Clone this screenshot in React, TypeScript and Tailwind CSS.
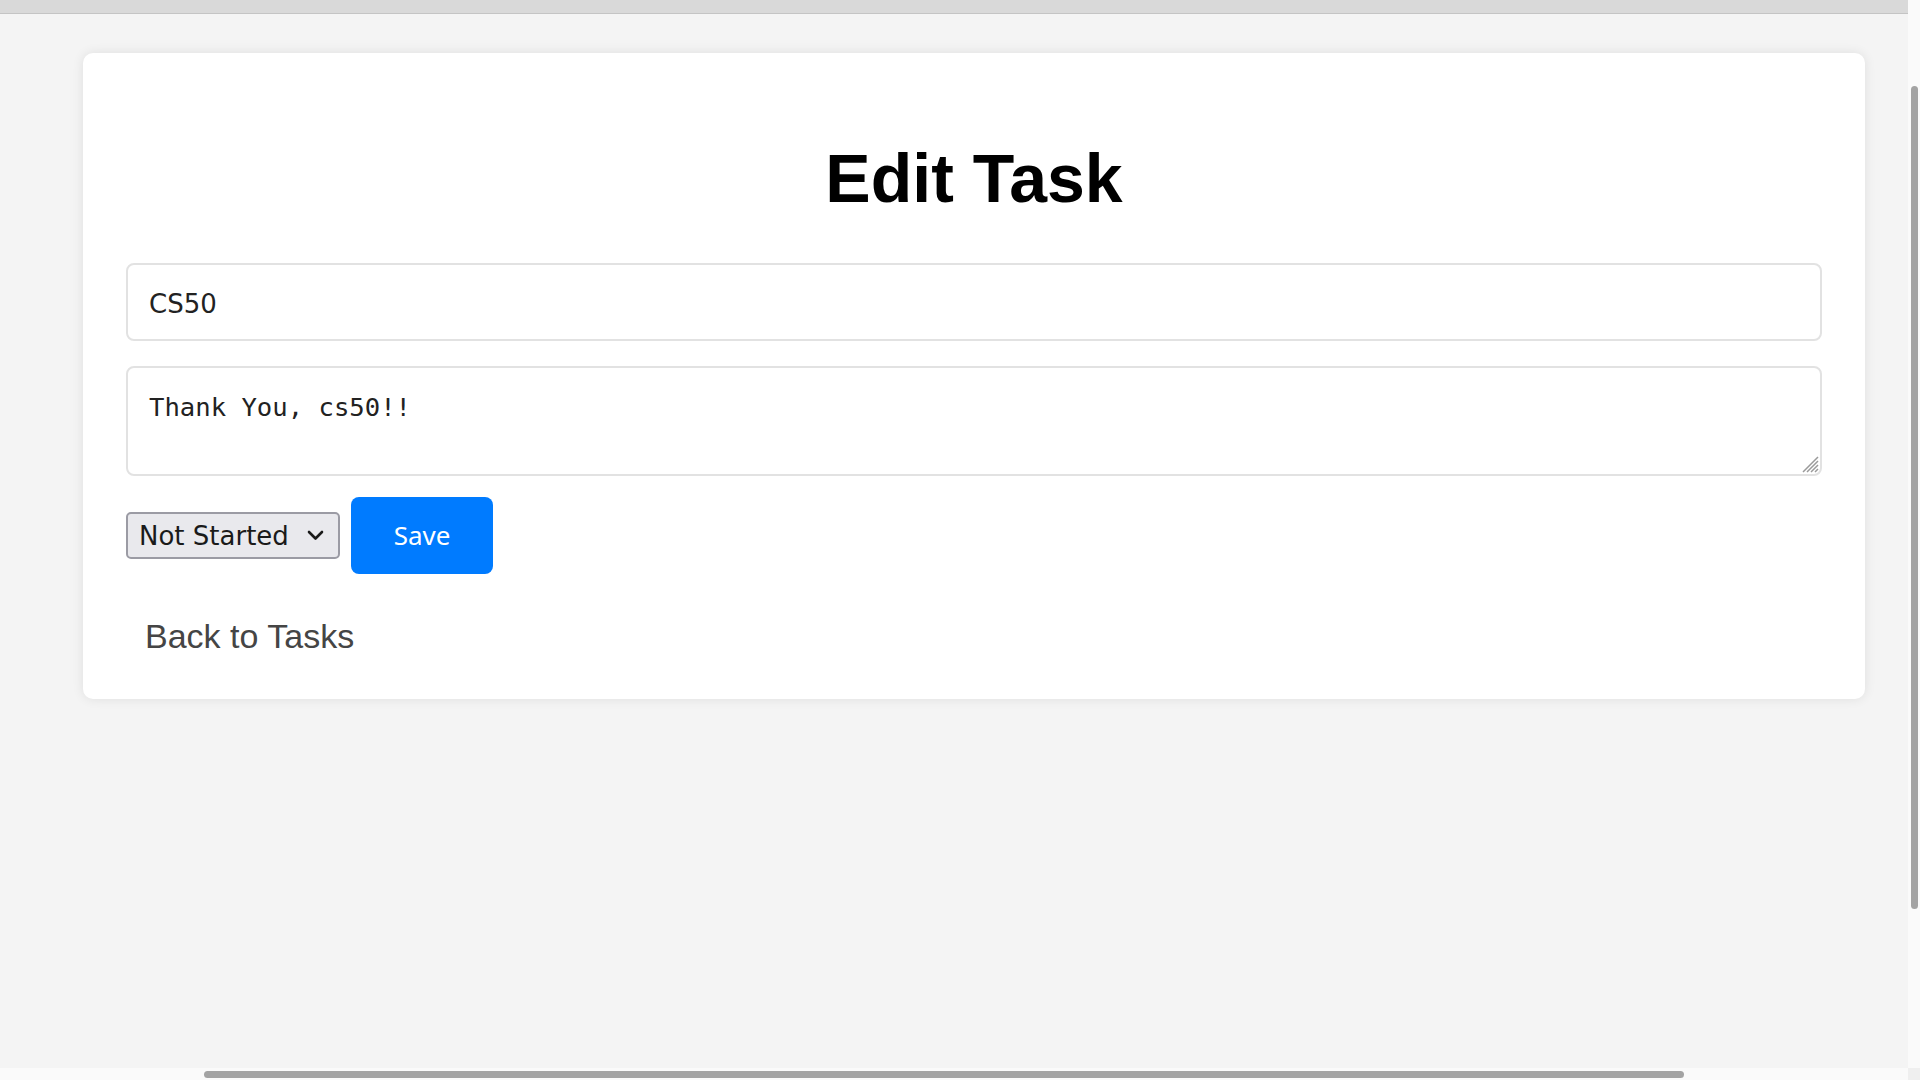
import React from "react";

export default function App() {
  return (
    <div className="w-[1920px] h-[1080px] flex flex-col overflow-hidden bg-[#f4f4f4]">
      <div className="flex flex-1 min-h-0">
        <div className="flex-1 flex flex-col bg-[#f4f4f4]">
          <div className="h-[14px] bg-[#d9d9d9] border-b border-[#c4c4c4]" />
          <div className="pt-[39px] pl-[83px] pr-[43px]">
            <div className="bg-white rounded-[10px] shadow-[0_0_12px_rgba(0,0,0,0.09)] pt-[87px] px-[43px] pb-[43px]">
              <h1 className="h-[76px] mb-[47px] text-center text-[68px] leading-[76px] font-bold text-black font-['Liberation_Sans',Arial,sans-serif]">
                Edit Task
              </h1>
              <input
                type="text"
                defaultValue="CS50"
                className="block w-full h-[78px] rounded-[8px] border-2 border-[#e2e2e2] bg-white px-[21px] pt-[3px] text-[26px] text-[#222] font-['DejaVu_Sans',sans-serif] outline-none"
              />
              <div className="relative mt-[25px]">
                <textarea
                  defaultValue="Thank You, cs50!!"
                  className="block w-full h-[110px] resize-none rounded-[8px] border-2 border-[#e2e2e2] bg-white px-[21px] pt-[24px] text-[25.6px] leading-[30px] text-[#222] font-['DejaVu_Sans_Mono',monospace] outline-none"
                />
                <svg
                  className="absolute right-[3px] bottom-[3px]"
                  width="20"
                  height="20"
                  viewBox="0 0 20 20"
                  fill="none"
                >
                  <path d="M19 4 L4 19 M19 8 L8 19 M19 12 L12 19 M19 16 L16 19" stroke="#9a9a9a" strokeWidth="1.5" />
                </svg>
              </div>
              <div className="flex items-center gap-[11px] mt-[21px]">
                <div className="flex items-center justify-between w-[214px] h-[47px] rounded-[5px] border-2 border-[#9b9ba4] bg-[#e9e9ed] pl-[11px] pr-[14px] text-[26px] text-[#1a1a1a] font-['DejaVu_Sans',sans-serif]">
                  <span className="leading-none">Not Started</span>
                  <svg width="17" height="11" viewBox="0 0 17 11" fill="none">
                    <path d="M2 2 L8.5 8.5 L15 2" stroke="#1a1a1a" strokeWidth="2.6" strokeLinecap="round" strokeLinejoin="round" />
                  </svg>
                </div>
                <button className="w-[142px] h-[77px] rounded-[8px] bg-[#007bff] text-white text-[26px] font-['Noto_Sans',sans-serif]">
                  Save
                </button>
              </div>
              <div className="mt-[43px] pl-[19px]">
                <a className="text-[34px] leading-[39px] text-[#454545] font-['Liberation_Sans',Arial,sans-serif]">
                  Back to Tasks
                </a>
              </div>
            </div>
          </div>
        </div>
        <div className="w-[12px] bg-[#fafafa] pt-[86px]">
          <div className="w-[7px] h-[823px] ml-[3px] rounded-full bg-[#a3a3a3]" />
        </div>
      </div>
      <div className="h-[12px] flex">
        <div className="flex-1 bg-[#fafafa] flex items-center pl-[204px]">
          <div className="w-[1480px] h-[7px] rounded-full bg-[#a3a3a3]" />
        </div>
        <div className="w-[12px] bg-[#efefef]" />
      </div>
    </div>
  );
}
